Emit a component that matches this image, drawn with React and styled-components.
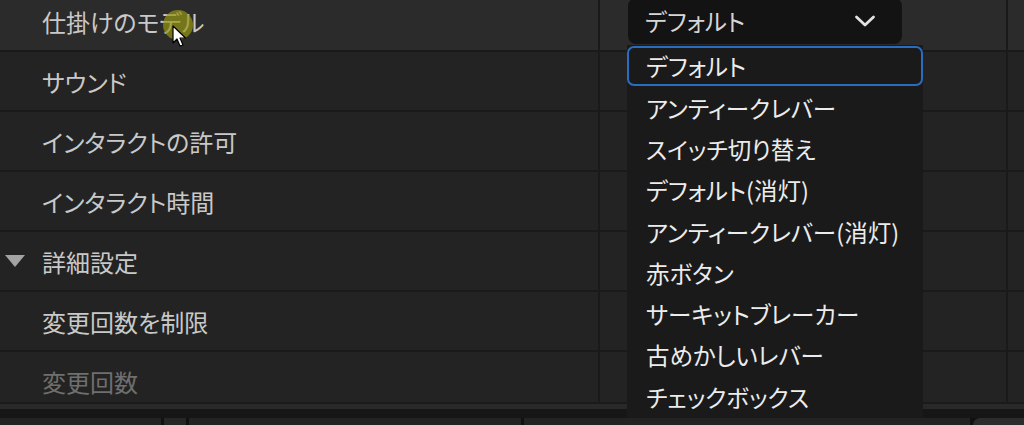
import React from 'react';
import styled, { createGlobalStyle } from 'styled-components';

const GlobalStyle = createGlobalStyle`
	html, body {
		margin: 0;
		padding: 0;
		background: #1a1a1a;
	}
	* {
		box-sizing: border-box;
	}
`;

const Page = styled.div`
	position: relative;
	width: 1024px;
	height: 425px;
	overflow: hidden;
	background: #1a1a1a;
	font-family: 'Noto Sans CJK JP', 'Noto Sans', sans-serif;
	font-feature-settings: 'palt';
`;

const Viewport = styled.div`
	height: 402px;
	overflow: hidden;
`;

const Table = styled.div`
	display: flex;
	flex-direction: column;
	gap: 2px;
	margin-top: -8px;
`;

const Row = styled.div`
	display: grid;
	grid-template-columns: 598px 406px 1fr;
	column-gap: 2px;
	height: 58px;
`;

const Cell = styled.div`
	display: flex;
	align-items: center;
	background: ${(p) => (p.$hover ? '#2b2b2b' : '#232323')};
`;

const Label = styled(Cell)`
	position: relative;
	padding-left: 42px;
	font-size: 24px;
	color: ${(p) => (p.$disabled ? '#6f6f6f' : '#c9c9c9')};
`;

const Caret = styled.span`
	position: absolute;
	left: 5px;
	top: 50%;
	margin-top: -6px;
	width: 0;
	height: 0;
	border-left: 10px solid transparent;
	border-right: 10px solid transparent;
	border-top: 12px solid #a3a3a3;
`;

const Select = styled.div`
	display: flex;
	align-items: center;
	justify-content: space-between;
	margin-left: 28px;
	width: 274px;
	height: 46px;
	padding: 0 26px 0 17px;
	border-radius: 8px;
	background: #131313;
	color: #d6d6d6;
	font-size: 23.5px;
`;

const Menu = styled.ul`
	position: absolute;
	left: 627px;
	top: 45px;
	width: 296px;
	height: 373px;
	margin: 0;
	padding: 1px 0 0;
	list-style: none;
	background: #1a1a1a;
	z-index: 2;
`;

const Item = styled.li`
	display: flex;
	align-items: center;
	height: ${(p) => (p.$active ? '40px' : '41.3px')};
	margin-bottom: ${(p) => (p.$active ? '1px' : '0')};
	padding-left: ${(p) => (p.$active ? '17px' : '19px')};
	border: ${(p) => (p.$active ? '2px solid #2a6cc0' : 'none')};
	border-radius: 7px;
	color: #ececec;
	font-size: 23.5px;
	white-space: nowrap;
`;

const Bottom = styled.div`
	border-top: 2px solid #1b1b1b;
`;

const Strip = styled.div`
	height: 5px;
	background: #292929;
`;

const Gutter = styled.div`
	height: 9px;
	background: #161616;
`;

const Tabs = styled.div`
	display: grid;
	grid-template-columns: 161px 22px 332px 446px 1fr;
	column-gap: 3px;
	height: 7px;
	background: #111;
`;

const Tab = styled.div`
	background: ${(p) => p.$tone || '#232323'};
	border-top-left-radius: ${(p) => (p.$round ? '12px' : '0')};
`;

const Pointer = styled.svg`
	position: absolute;
	left: 163px;
	top: 10px;
	overflow: visible;
	z-index: 3;
	pointer-events: none;
`;

const options = [
	'デフォルト',
	'アンティークレバー',
	'スイッチ切り替え',
	'デフォルト(消灯)',
	'アンティークレバー(消灯)',
	'赤ボタン',
	'サーキットブレーカー',
	'古めかしいレバー',
	'チェックボックス',
];

const rows = [
	{ label: '仕掛けのモデル', hover: true },
	{ label: 'サウンド' },
	{ label: 'インタラクトの許可' },
	{ label: 'インタラクト時間' },
	{ label: '詳細設定', group: true },
	{ label: '変更回数を制限' },
	{ label: '変更回数', disabled: true },
];

function Chevron() {
	return (
		<svg width="22" height="12" viewBox="0 0 22 12">
			<path
				d="M2.5 2 L11 10 L19.5 2"
				fill="none"
				stroke="#e2e2e2"
				strokeWidth="2.8"
				strokeLinecap="round"
				strokeLinejoin="round"
			/>
		</svg>
	);
}

export default function App() {
	return (
		<Page>
			<GlobalStyle />
			<Viewport>
				<Table>
					{rows.map((r, i) => (
						<Row key={r.label}>
							<Label $hover={r.hover} $disabled={r.disabled}>
								{r.group && <Caret />}
								{r.label}
							</Label>
							<Cell $hover={r.hover}>
								{i === 0 && (
									<Select>
										<span>デフォルト</span>
										<Chevron />
									</Select>
								)}
							</Cell>
							<Cell $hover={r.hover} />
						</Row>
					))}
				</Table>
			</Viewport>
			<Bottom>
				<Strip />
				<Gutter />
				<Tabs>
					<Tab />
					<Tab $tone="#262626" />
					<Tab />
					<Tab />
					<Tab $tone="#2c2c2c" $round />
				</Tabs>
			</Bottom>

			<Menu>
				{options.map((o, i) => (
					<Item key={o} $active={i === 0}>
						{o}
					</Item>
				))}
			</Menu>

			<Pointer width="32" height="40" viewBox="0 0 32 40">
				<circle cx="15" cy="15" r="15" fill="rgba(150, 150, 20, 0.7)" />
				<path
					d="M10 16 L10 33 L14 29 L17 36 L20 35 L17 28 L22.5 28 Z"
					fill="#ffffff"
					stroke="#000000"
					strokeWidth="1.2"
					strokeLinejoin="round"
				/>
			</Pointer>
		</Page>
	);
}
